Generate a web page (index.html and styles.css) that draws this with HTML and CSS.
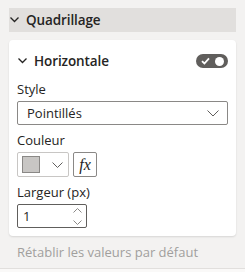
FILE: index.html
```html
<!DOCTYPE html>
<html lang="fr">
<head>
<meta charset="utf-8">
<link rel="stylesheet" href="styles.css">
</head>
<body>
<div class="pane">
  <div class="section-header">
    <svg class="chev" width="9" height="6" viewBox="0 0 9 6"><polyline points="0.5,0.5 4.5,4.5 8.5,0.5" fill="none" stroke="#252423" stroke-width="1.3"/></svg>
    <span class="section-title">Quadrillage</span>
  </div>
  <div class="card">
    <div class="card-header">
      <div class="card-title-wrap">
        <svg class="chev" width="9" height="6" viewBox="0 0 9 6"><polyline points="0.5,0.5 4.5,4.5 8.5,0.5" fill="none" stroke="#252423" stroke-width="1.3"/></svg>
        <span class="card-title">Horizontale</span>
      </div>
      <div class="toggle">
        <svg width="9" height="8" viewBox="0 0 9 8"><polyline points="1,4.2 3.4,6.5 8,1.3" fill="none" stroke="#ffffff" stroke-width="1.8"/></svg>
        <span class="knob"></span>
      </div>
    </div>
    <div class="label">Style</div>
    <div class="select">
      <span>Pointillés</span>
      <svg width="12" height="7" viewBox="0 0 12 7"><polyline points="0.5,0.5 6,6 11.5,0.5" fill="none" stroke="#605e5c" stroke-width="1"/></svg>
    </div>
    <div class="label">Couleur</div>
    <div class="color-row">
      <div class="color-picker">
        <span class="swatch"></span>
        <svg width="11" height="6" viewBox="0 0 11 6"><polyline points="0.5,0.5 5.5,5.5 10.5,0.5" fill="none" stroke="#605e5c" stroke-width="1"/></svg>
      </div>
      <div class="fx">fx</div>
    </div>
    <div class="label">Largeur (px)</div>
    <div class="number">
      <span>1</span>
      <div class="spin">
        <svg width="9" height="5" viewBox="0 0 9 5"><polyline points="0.5,4.5 4.5,0.5 8.5,4.5" fill="none" stroke="#8a8886" stroke-width="1"/></svg>
        <svg width="9" height="5" viewBox="0 0 9 5"><polyline points="0.5,0.5 4.5,4.5 8.5,0.5" fill="none" stroke="#8a8886" stroke-width="1"/></svg>
      </div>
    </div>
  </div>
  <div class="reset">Rétablir les valeurs par défaut</div>
</div>
<div class="bottom"></div>
</body>
</html>
```

FILE: styles.css
```css
html, body {
  margin: 0;
  padding: 0;
}
body {
  width: 245px;
  height: 272px;
  background: #f3f2f1;
  font-family: "Open Sans", "Noto Sans", sans-serif;
  color: #252423;
  overflow: hidden;
}
.pane {
  width: 227px;
  height: 260px;
  padding: 8px 9px 0 9px;
  border-right: 1px solid #e6e4e2;
  box-sizing: content-box;
}
.section-header {
  height: 24px;
  background: #e1dfdd;
  display: flex;
  align-items: center;
  padding-left: 1px;
}
.chev {
  flex: none;
  margin-right: 7px;
}
.section-title,
.card-title {
  font-size: 13.5px;
  font-weight: 600;
  letter-spacing: -0.1px;
}
.card {
  margin-top: 8px;
  background: #ffffff;
  border-radius: 4px;
  box-shadow: 0 1px 2px rgba(0, 0, 0, 0.12);
  padding: 8px 8px 8px 8px;
}
.card-header {
  height: 26px;
  display: flex;
  align-items: center;
  justify-content: space-between;
}
.card-title-wrap {
  display: flex;
  align-items: center;
  padding-left: 1px;
}
.toggle {
  width: 32px;
  height: 14px;
  border-radius: 7px;
  background: #605e5c;
  display: flex;
  align-items: center;
  justify-content: space-between;
  padding: 0 4px 0 5px;
  box-sizing: border-box;
}
.toggle .knob {
  width: 9px;
  height: 9px;
  border-radius: 50%;
  background: #ffffff;
}
.label {
  font-size: 13px;
  line-height: 20px;
  margin-top: 5px;
  margin-bottom: 2px;
}
.select {
  height: 24px;
  border: 1px solid #8a8886;
  border-radius: 2px;
  box-sizing: border-box;
  display: flex;
  align-items: center;
  justify-content: space-between;
  padding: 0 8px 0 9px;
  font-size: 13px;
}
.color-row {
  display: flex;
  gap: 4px;
}
.color-picker {
  width: 52px;
  height: 25px;
  border: 1px solid #c8c6c4;
  border-radius: 2px;
  box-sizing: border-box;
  display: flex;
  align-items: center;
  justify-content: space-between;
  padding: 0 5px 0 4px;
}
.swatch {
  width: 16px;
  height: 15px;
  background: #c8c6c4;
  border: 1px solid #8a8886;
}
.fx {
  width: 24px;
  height: 25px;
  border: 1px solid #8a8886;
  border-radius: 2px;
  box-sizing: border-box;
  display: flex;
  align-items: center;
  justify-content: center;
  font-family: "Liberation Serif", serif;
  font-style: italic;
  font-size: 16px;
  color: #252423;
}
.number {
  width: 70px;
  height: 24px;
  border: 1px solid #605e5c;
  border-radius: 2px;
  box-sizing: border-box;
  display: flex;
  align-items: center;
  justify-content: space-between;
  padding: 0 4px 0 5px;
  font-size: 13px;
}
.spin {
  display: flex;
  flex-direction: column;
  gap: 7px;
}
.reset {
  margin-top: 6px;
  padding-left: 8px;
  font-size: 13px;
  line-height: 20px;
  color: #a19f9d;
}
.bottom {
  height: 4px;
  border-top: 1px solid #e1dfdd;
  background: #faf9f8;
}
```
